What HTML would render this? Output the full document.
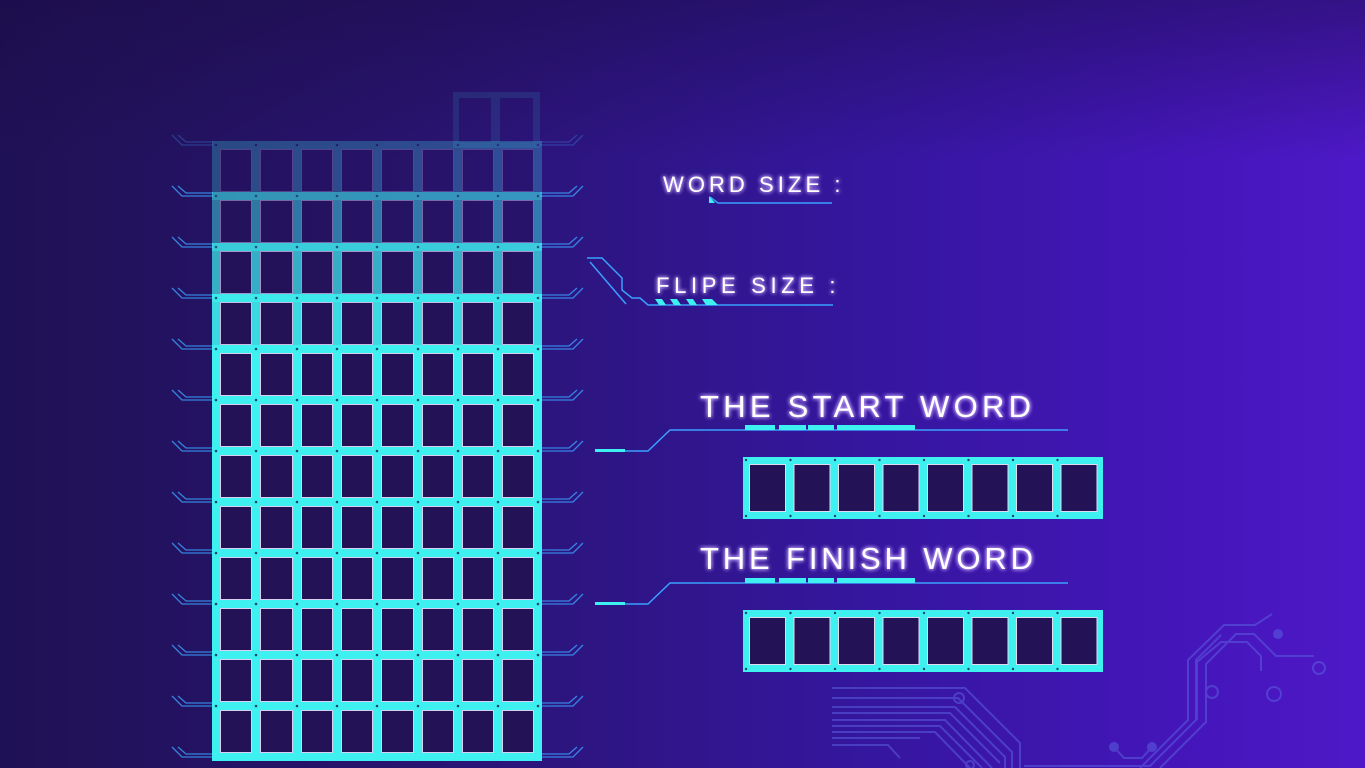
<!DOCTYPE html>
<html><head><meta charset="utf-8"><style>
html,body{margin:0;padding:0;width:1365px;height:768px;overflow:hidden}
body{background:linear-gradient(90deg,#1f1155 0%,#291470 30%,#33169a 60%,#4316b8 85%,#4e18c8 100%)}
svg{position:absolute;left:0;top:0}
.t{font-family:"Liberation Sans",sans-serif;font-weight:normal;fill:#fff;filter:url(#glow)}
</style></head><body>
<svg width="1365" height="768" viewBox="0 0 1365 768" id="s">
<defs>
<filter id="glow" x="-20%" y="-50%" width="140%" height="200%"><feGaussianBlur stdDeviation="2.2" result="b"/><feFlood flood-color="#c9a8ff"/><feComposite in2="b" operator="in" result="c"/><feMerge><feMergeNode in="c"/><feMergeNode in="c"/><feMergeNode in="SourceGraphic"/></feMerge></filter>
<linearGradient id="top" x1="0" y1="0" x2="0" y2="1"><stop offset="0" stop-color="#1a0c45" stop-opacity=".5"/><stop offset="1" stop-color="#1a0c45" stop-opacity="0"/></linearGradient>
</defs>
<rect width="1365" height="160" fill="url(#top)"/>
<g id="circ" stroke="#5b5fe0" stroke-width="2" fill="none" opacity=".55">
<path d="M832 688H965L1020 743V768"/><path d="M832 698H958L1012 752V768"/><path d="M832 707H955L1005 757V768"/><path d="M832 713H950L1000 763"/><path d="M832 720H945L992 768"/><path d="M832 726H940L982 768"/><path d="M832 732H935L970 768"/><path d="M832 738H920"/><path d="M832 745H888L900 758"/>
<circle cx="959" cy="698" r="5"/><circle cx="970" cy="765" r="4"/>
<path d="M1024 766H1150L1197 719V662L1221 642H1247L1261 656V671"/><path d="M1160 768L1206 722V664L1236 634H1254L1276 656H1314"/><path d="M1140 768L1188 720V660L1224 625H1255L1272 614"/><path d="M1196 720V660L1221 635"/>
<circle cx="1319" cy="668" r="6"/><circle cx="1212" cy="692" r="6"/><circle cx="1274" cy="694" r="7"/>
<circle cx="1278" cy="634" r="4" fill="#5b5fe0"/><circle cx="1114" cy="747" r="4" fill="#5b5fe0"/><circle cx="1152" cy="747" r="4" fill="#5b5fe0"/><path d="M1114 747L1124 758H1142L1152 747"/>
</g>
<g id="grid"></g>
<g id="wb1"></g><g id="wb2"></g>
<text class="t" x="663" y="192" font-size="22" letter-spacing="2.5" textLength="180">WORD SIZE :</text>
<path d="M710 197L718 203H832" stroke="#3aa0ff" stroke-width="1.5" fill="none"/><path d="M709 196L715 203H709Z" fill="#4ee"/>
<text class="t" x="656" y="293" font-size="22" letter-spacing="2.5" textLength="182">FLIPE  SIZE :</text>
<path d="M587 258H602L622 278V290L632 298H640L648 305H833M590 262L626 304" stroke="#3aa0ff" stroke-width="1.5" fill="none"/>
<path d="M655 299H662L666 305H659ZM670 299H677L681 305H674ZM686 299H693L697 305H690ZM702 299H712L718 305H706Z" fill="#3ef0f0"/>
<text class="t" x="700" y="417" font-size="31" letter-spacing="3" textLength="334">THE START WORD</text>
<path d="M595 451H648L670 430H1068" stroke="#3aa0ff" stroke-width="1.5" fill="none"/>
<path d="M595 449H625V452H595Z M745 425H775V430H745ZM779 425H806V430H779ZM808 425H834V430H808ZM837 425H915V430H837Z" fill="#3ef0f0"/>
<text class="t" x="700" y="569" font-size="31" letter-spacing="3" textLength="336">THE  FINISH WORD</text>
<path d="M595 604H648L670 583H1068" stroke="#3aa0ff" stroke-width="1.5" fill="none"/>
<path d="M595 602H625V605H595Z M745 578H775V583H745ZM779 578H806V583H779ZM808 578H834V583H808ZM837 578H915V583H837Z" fill="#3ef0f0"/>
</svg>
<script>
var NS="http://www.w3.org/2000/svg";
function el(p,t,a){var e=document.createElementNS(NS,t);for(var k in a)e.setAttribute(k,a[k]);p.appendChild(e);return e;}
var g=document.getElementById('grid');
var xs=[];for(var i=0;i<=8;i++)xs.push(Math.round(216+i*40.3));
var ys=[];for(var j=0;j<=12;j++)ys.push(145+j*51);
var ex=el(g,'g',{opacity:.1});
el(ex,'rect',{x:453,y:92,width:87,height:56,fill:'#3ef0f0'});
el(ex,'rect',{x:459,y:98,width:32,height:44,fill:'#2a1570'});
el(ex,'rect',{x:500,y:98,width:33,height:44,fill:'#2a1570'});
for(var j=0;j<ys.length;j++){var y=ys[j];
 var tk=el(g,'g',{stroke:'#3aa0ff','stroke-width':1.3,fill:'none',opacity:j==0?.3:.8});
 el(tk,'path',{d:'M172 '+(y-10)+'L182 '+(y)+'H213M178 '+(y-10)+'L186 '+(y-3)+'H213'});
 el(tk,'path',{d:'M583 '+(y-10)+'L573 '+y+'H540M577 '+(y-10)+'L569 '+(y-3)+'H540'});
}
var ops=[.25,.45,.7,.9];
for(var j=0;j<12;j++){
 var op=j<4?ops[j]:1;
 var r=el(g,'g',{opacity:op});
 var y0=ys[j],y1=ys[j+1];
 el(r,'rect',{x:xs[0]-4,y:y0-4,width:xs[8]-xs[0]+8,height:y1-y0+8,fill:'#3ef0f0'});
 for(var i=0;i<8;i++){
  el(r,'rect',{x:xs[i]+4,y:y0+4,width:xs[i+1]-xs[i]-8,height:y1-y0-8,fill:'#d8d0f0'});
  el(r,'rect',{x:xs[i]+5,y:y0+5,width:xs[i+1]-xs[i]-10,height:y1-y0-10,fill:'#231255'});
 }
 for(var i=0;i<=8;i++){el(r,'circle',{cx:xs[i],cy:y0,r:1.3,fill:'#1a4a70'});}
}
function wb(id,y){var p=document.getElementById(id);
 el(p,'rect',{x:743,y:y,width:360,height:62,fill:'#3ef0f0'});
 for(var i=0;i<8;i++){var x=743+i*44.5;
  el(p,'rect',{x:x+6,y:y+7,width:37,height:48,fill:'#e0dcf0'});
  el(p,'rect',{x:x+7,y:y+8,width:35,height:46,fill:'#231255'});
  el(p,'circle',{cx:x+3,cy:y+3,r:1.2,fill:'#1a4a70'});el(p,'circle',{cx:x+3,cy:y+59,r:1.2,fill:'#1a4a70'});
 }
}
wb('wb1',457);wb('wb2',610);
</script>
</body></html>
